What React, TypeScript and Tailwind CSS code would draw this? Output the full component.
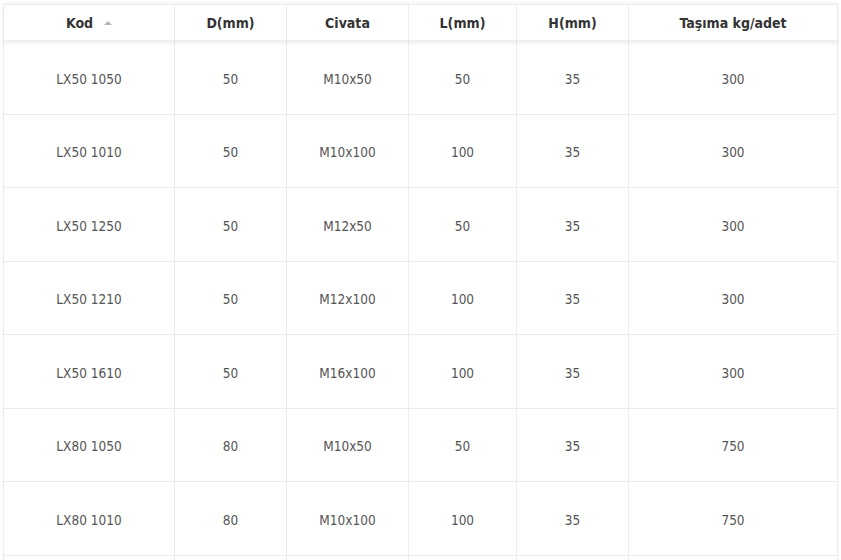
import React from "react";

const rows = [
  ["LX50 1050", "50", "M10x50", "50", "35", "300"],
  ["LX50 1010", "50", "M10x100", "100", "35", "300"],
  ["LX50 1250", "50", "M12x50", "50", "35", "300"],
  ["LX50 1210", "50", "M12x100", "100", "35", "300"],
  ["LX50 1610", "50", "M16x100", "100", "35", "300"],
  ["LX80 1050", "80", "M10x50", "50", "35", "750"],
  ["LX80 1010", "80", "M10x100", "100", "35", "750"],
  ["", "", "", "", "", ""],
];

const widths = ["w-[171px]", "w-[112px]", "w-[122px]", "w-[108px]", "w-[112px]", "w-[209px]"];
const heads = ["Kod", "D(mm)", "Civata", "L(mm)", "H(mm)", "Taşıma kg/adet"];

export default function App() {
  return (
    <div className="w-[841px] h-[560px] overflow-hidden bg-white pl-[3px] pt-[4px] font-['DejaVu_Sans_Condensed','DejaVu_Sans',sans-serif]">
      <table className="border-collapse table-fixed w-[835px] shadow-[0_-2px_3px_rgba(0,0,0,0.04)]">
        <thead>
          <tr className="h-[36px] shadow-[0_3px_4px_rgba(0,0,0,0.06)] relative">
            {heads.map((h, i) => (
              <th
                key={i}
                className={`${widths[i]} border border-[#ececec] text-center align-middle text-[14px] font-bold text-[#333] p-0 pt-[1px]`}
              >
                {h}
                {i === 0 && (
                  <span className="inline-block ml-[11px] align-middle relative -top-[1px] w-0 h-0 border-l-[4px] border-r-[4px] border-b-[4px] border-l-transparent border-r-transparent border-b-[#b5b5b5]"></span>
                )}
              </th>
            ))}
          </tr>
        </thead>
        <tbody>
          {rows.map((r, ri) => (
            <tr key={ri} className="h-[73.5px]">
              {r.map((c, ci) => (
                <td key={ci} className="border border-[#ececec] text-center align-middle text-[13.5px] text-[#555] p-0 pt-[3px]">
                  {c}
                </td>
              ))}
            </tr>
          ))}
        </tbody>
      </table>
    </div>
  );
}
